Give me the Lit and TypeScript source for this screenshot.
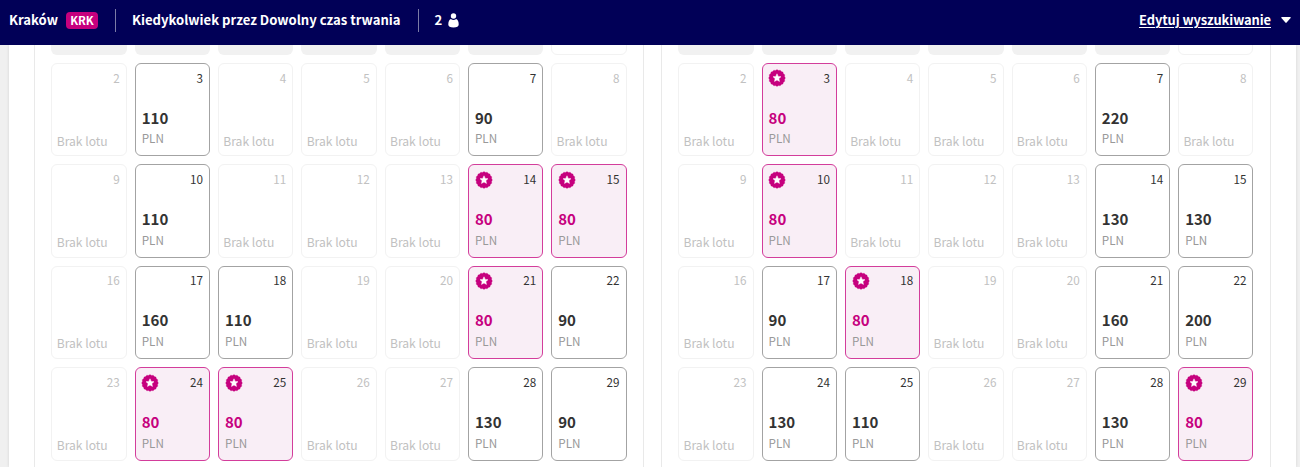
import { LitElement, html, css, svg } from 'lit';
import { customElement, property } from 'lit/decorators.js';
import { classMap } from 'lit/directives/class-map.js';

interface Month {
  weeks: Record<number, number>[];
  // cells of the first week that lie before the first day
  blanks: number;
}

const LOWEST = 80;

const MONTHS: Month[] = [
  {
    blanks: 6,
    weeks: [
      { 3: 110, 7: 90 },
      { 10: 110, 14: 80, 15: 80 },
      { 17: 160, 18: 110, 21: 80, 22: 90 },
      { 24: 80, 25: 80, 28: 130, 29: 90 },
    ],
  },
  {
    blanks: 6,
    weeks: [
      { 3: 80, 7: 220 },
      { 10: 80, 14: 130, 15: 130 },
      { 17: 90, 18: 80, 21: 160, 22: 200 },
      { 24: 130, 25: 110, 28: 130, 29: 80 },
    ],
  },
];

const points = (count: number, outer: number, inner: number) =>
  Array.from({ length: count * 2 }, (_, i) => {
    const r = i % 2 ? inner : outer;
    const a = (Math.PI * i) / count - Math.PI / 2;
    return `${(r * Math.cos(a)).toFixed(2)},${(r * Math.sin(a)).toFixed(2)}`;
  }).join(' ');

const badge = svg`
  <polygon points=${points(16, 8.4, 7.7)} fill="#c6007e" stroke="#c6007e" stroke-width="0.3" stroke-linejoin="round" />
  <polygon points=${points(5, 4.2, 2)} fill="#fff" stroke="#fff" stroke-width="0.5" stroke-linejoin="round" />
`;

@customElement('search-bar')
export class SearchBar extends LitElement {
  static override styles = css`
    :host {
      display: flex;
      align-items: center;
      box-sizing: border-box;
      height: 45px;
      padding: 0 9px 5px;
      background: #010057;
      color: #fff;
      font-size: 13.1px;
      font-weight: 700;
      line-height: 20px;
      white-space: nowrap;
    }

    .code {
      box-sizing: border-box;
      width: 32px;
      margin-left: 8px;
      height: 17px;
      line-height: 17px;
      font-size: 11.5px;
      text-align: center;
      border-radius: 4px;
      background: #c6007e;
    }

    .divider {
      width: 1px;
      height: 23px;
      margin: 0 16px 0 17px;
      background: #7b7ba6;
    }

    .person {
      width: 11px;
      height: 15px;
      margin-left: 6px;
    }

    .edit {
      margin-left: auto;
      font-size: 12.9px;
      letter-spacing: -0.08px;
      text-decoration: underline;
      text-underline-offset: 2px;
      text-decoration-thickness: 1px;
    }

    .caret {
      width: 10px;
      height: 6px;
      margin-left: 9.5px;
      margin-right: 0.5px;
    }
  `;

  override render() {
    return html`
      <span>Kraków</span>
      <span class="code">KRK</span>
      <span class="divider"></span>
      <span>Kiedykolwiek przez Dowolny czas trwania</span>
      <span class="divider"></span>
      <span>2</span>
      <svg class="person" viewBox="0 0 11 15" fill="#fff">
        <circle cx="5.5" cy="3" r="2.7" />
        <path d="M2.8 6Q5.5 7.8 8.2 6Q10.7 7.4 10.7 11.5Q10.7 14.5 5.5 14.5Q.3 14.5 .3 11.5Q.3 7.4 2.8 6Z" />
      </svg>
      <span class="edit">Edytuj wyszukiwanie</span>
      <svg class="caret" viewBox="0 0 10 6" fill="#fff">
        <path d="M1 0H9Q10.4 0 9.6 1L5.6 5.6Q5 6.2 4.4 5.6L.4 1Q-.4 0 1 0Z" />
      </svg>
    `;
  }
}

@customElement('day-cell')
export class DayCell extends LitElement {
  @property({ type: Number })
  declare day: number;
  @property({ type: Number })
  declare price?: number;

  static override styles = css`
    :host {
      display: block;
    }

    .cell {
      display: flex;
      flex-direction: column;
      box-sizing: border-box;
      height: 100%;
      padding: 5.6px 6px 6.8px 4.3px;
      border: 1px solid #f2f2f2;
      border-radius: 6px;
      color: #c1c1c1;
      font-size: 11.7px;
      line-height: 16px;
    }

    .top {
      display: flex;
      justify-content: flex-end;
      height: 16px;
    }

    .badge {
      width: 18px;
      height: 18px;
      margin: -0.3px auto 0 -0.3px;
    }

    .none {
      margin-top: auto;
      font-size: 12.1px;
    }

    .price {
      margin-top: 22px;
      font-size: 15px;
      font-weight: 700;
      line-height: 20px;
      color: #333;
    }

    .currency {
      margin-top: 2.8px;
      color: #999;
      font-size: 11.7px;
    }

    .flight {
      padding-left: 6px;
      border-color: #a3a3a3;
    }

    .flight .top {
      color: #333;
    }

    .lowest {
      border-color: #d33d9b;
      background: #f9eef6;
    }

    .lowest .price {
      color: #c6007e;
    }
  `;

  override render() {
    const flight = this.price !== undefined;
    const lowest = this.price === LOWEST;
    return html`
      <div class=${classMap({ cell: true, flight, lowest })}>
        <div class="top">
          ${lowest ? html`<svg class="badge" viewBox="-9 -9 18 18">${badge}</svg>` : ''}
          <span>${this.day}</span>
        </div>
        ${flight
          ? html`<div class="price">${this.price}</div>
              <div class="currency">PLN</div>`
          : html`<div class="none">Brak lotu</div>`}
      </div>
    `;
  }
}

@customElement('month-calendar')
export class MonthCalendar extends LitElement {
  @property({ attribute: false })
  declare month: Month;

  static override styles = css`
    :host {
      display: flex;
      flex-direction: column;
      justify-content: flex-end;
      box-sizing: border-box;
      padding: 0 16.4px 6.4px;
      border: solid #e9e9e9;
      border-width: 0 1px;
    }

    .grid {
      display: grid;
      grid-template-columns: repeat(7, 1fr);
      grid-auto-rows: 93.4px;
      gap: 8px;
    }

    .blank {
      border-radius: 6px;
      background: #f1f1f1;
    }

    .first {
      border: 1px solid #f2f2f2;
      border-radius: 6px;
    }
  `;

  override render() {
    return html`
      <div class="grid">
        ${Array.from({ length: this.month.blanks }, () => html`<div class="blank"></div>`)}
        <div class="first"></div>
        ${this.month.weeks.map((prices, week) =>
          Array.from({ length: 7 }, (_, i) => {
            const day = week * 7 + i + 2;
            return html`<day-cell .day=${day} .price=${prices[day]}></day-cell>`;
          })
        )}
      </div>
    `;
  }
}

@customElement('app-root')
export class AppRoot extends LitElement {
  static override styles = css`
    :host {
      display: flex;
      flex-direction: column;
      height: 467px;
      overflow: hidden;
      background: #f0f0f0;
      font-family: 'Noto Sans CJK SC', 'Open Sans', sans-serif;
    }

    search-bar {
      position: relative;
      z-index: 1;
      flex: none;
    }

    main {
      display: flex;
      flex: 1;
      min-height: 0;
      gap: 16.9px;
      margin: 0 4px 0 9px;
      padding: 0 25.2px 0 25px;
      background: #fff;
      box-shadow: 0 0 3px rgba(0, 0, 0, 0.12);
    }

    month-calendar {
      flex: 1;
    }
  `;

  override render() {
    return html`
      <search-bar></search-bar>
      <main>${MONTHS.map((month) => html`<month-calendar .month=${month}></month-calendar>`)}</main>
    `;
  }
}
